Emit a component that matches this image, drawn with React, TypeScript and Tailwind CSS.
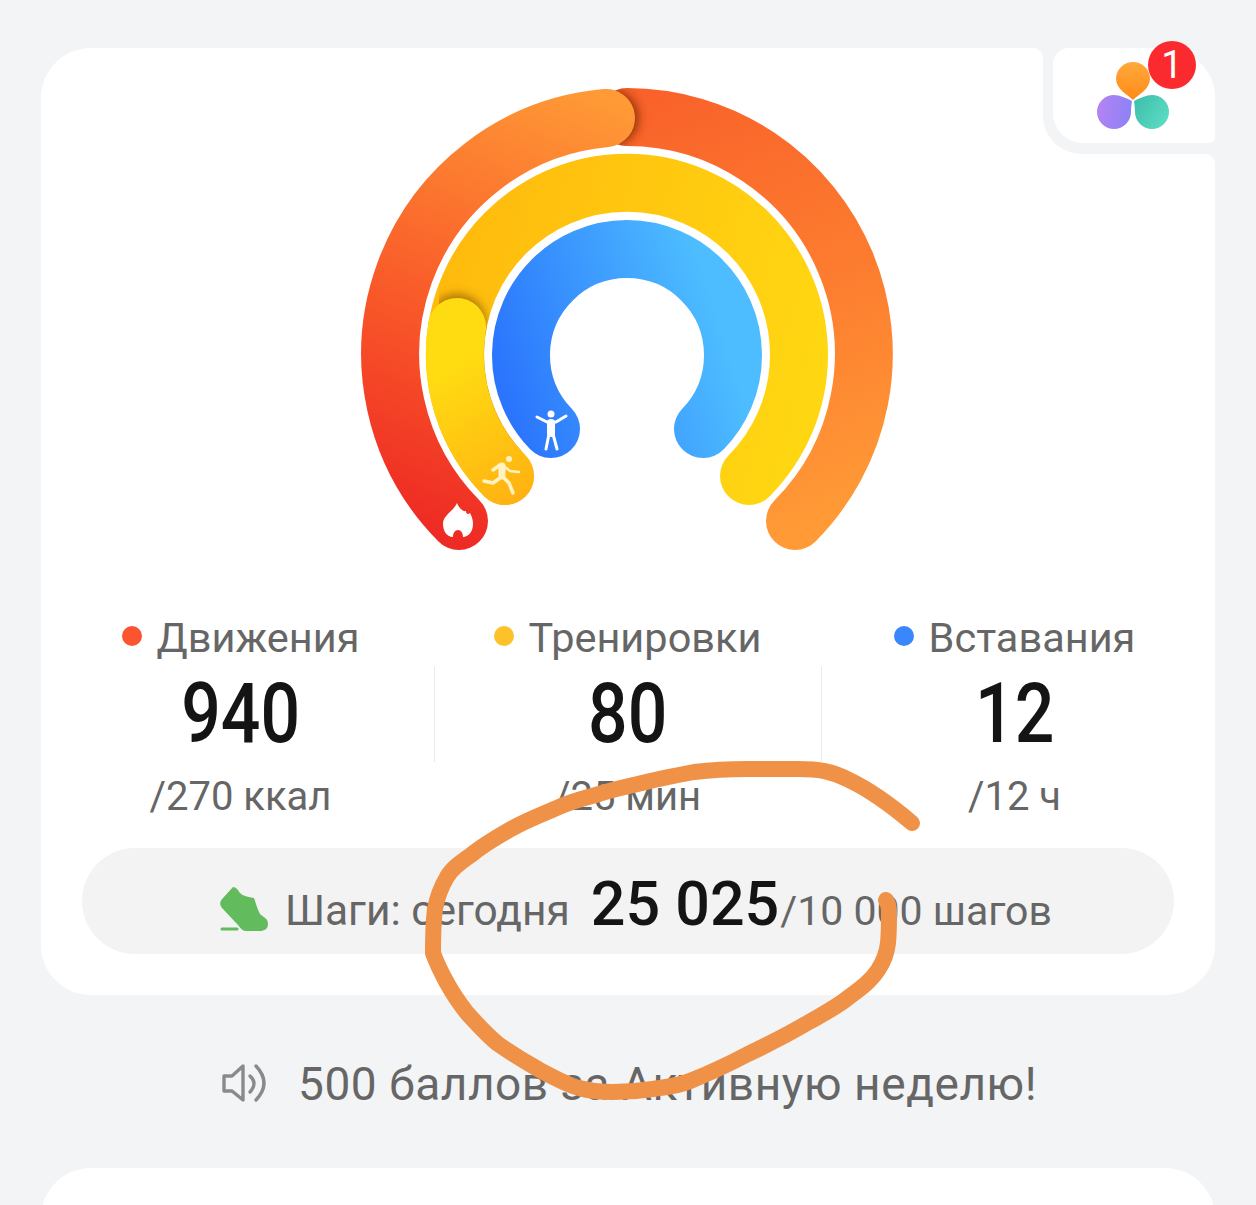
const font = { fontFamily: '"Roboto", "Noto Sans", sans-serif' };

const stats = [
  { label: "Движения", dot: "bg-[#fb5430]", value: "940", sub: "/270 ккал" },
  { label: "Тренировки", dot: "bg-[#fdc129]", value: "80", sub: "/25 мин" },
  { label: "Вставания", dot: "bg-[#3a86fb]", value: "12", sub: "/12 ч" },
];

const OUTER_BASE = "M627 117 A237 237 0 0 1 795 521";
const OUTER_TOP = "M459 521 A237 237 0 0 1 606 118";
const MID_BASE = "M505 476 A172 172 0 1 1 749 476";
const MID_TOP = "M505 476 A172 172 0 0 1 457 327";
const INNER = "M551 429 A106 106 0 1 1 703 429";

function Gauge() {
  return (
    <svg viewBox="359 86 536 470" className="block w-[536px] h-[470px] ml-[318px]">
      <defs>
        <linearGradient id="outerBase" gradientUnits="userSpaceOnUse" x1="640" y1="100" x2="800" y2="530">
          <stop offset="0" stopColor="#f9622a" />
          <stop offset="0.55" stopColor="#fd7f30" />
          <stop offset="1" stopColor="#ff9a36" />
        </linearGradient>
        <linearGradient id="outerTop" gradientUnits="userSpaceOnUse" x1="450" y1="540" x2="625" y2="105">
          <stop offset="0" stopColor="#ee2a24" />
          <stop offset="0.45" stopColor="#f95a29" />
          <stop offset="1" stopColor="#ff9a36" />
        </linearGradient>
        <linearGradient id="midBase" gradientUnits="userSpaceOnUse" x1="440" y1="300" x2="800" y2="400">
          <stop offset="0" stopColor="#ffbb0d" />
          <stop offset="1" stopColor="#ffd612" />
        </linearGradient>
        <linearGradient id="midTop" gradientUnits="userSpaceOnUse" x1="450" y1="370" x2="520" y2="500">
          <stop offset="0" stopColor="#ffdb12" />
          <stop offset="1" stopColor="#ffb212" />
        </linearGradient>
        <linearGradient id="innerGrad" gradientUnits="userSpaceOnUse" x1="520" y1="440" x2="735" y2="370">
          <stop offset="0" stopColor="#2b75fd" />
          <stop offset="1" stopColor="#4dbdff" />
        </linearGradient>
        <filter id="soft" x="-30%" y="-30%" width="160%" height="160%">
          <feGaussianBlur stdDeviation="5" />
        </filter>
        <mask id="outerMask" maskUnits="userSpaceOnUse" x="359" y="86" width="536" height="470">
          <path d={OUTER_BASE} stroke="white" strokeWidth="58" fill="none" strokeLinecap="round" />
        </mask>
        <mask id="midMask" maskUnits="userSpaceOnUse" x="359" y="86" width="536" height="470">
          <path d={MID_BASE} stroke="white" strokeWidth="58" fill="none" strokeLinecap="round" />
        </mask>
      </defs>
      <g fill="none" strokeWidth="58" strokeLinecap="round">
        <path d={OUTER_BASE} stroke="url(#outerBase)" />
        <g mask="url(#outerMask)">
          <path d={OUTER_TOP} stroke="#7a2a00" strokeOpacity="0.75" filter="url(#soft)" transform="translate(4 0)" />
        </g>
        <path d={OUTER_TOP} stroke="url(#outerTop)" />
        <path d={MID_BASE} stroke="url(#midBase)" />
        <g mask="url(#midMask)">
          <path d={MID_TOP} stroke="#8a5a00" strokeOpacity="0.7" filter="url(#soft)" transform="translate(0 -4)" />
        </g>
        <path d={MID_TOP} stroke="url(#midTop)" />
        <path d={INNER} stroke="url(#innerGrad)" />
      </g>
      {/* flame */}
      <path
        d="M457 503 C459 508 463 512 466 511 C466 514 468 515 470 513 C472 517 473 520 473 524 C473 532 468 537 463 537 C463 533 461 530 458 530 C455 530 453 533 453 537 C447 537 443 531 443 524 C443 515 453 512 457 503 Z"
        fill="white"
      />
      {/* runner */}
      <g fill="none" stroke="#fff2c4" strokeLinecap="round" strokeLinejoin="round">
        <circle cx="509" cy="459" r="3" fill="#fff2c4" stroke="none" />
        <path d="M502 466 L502 476" strokeWidth="7" />
        <path d="M505 467 L510 471 L519 472" strokeWidth="2.5" />
        <path d="M500 465 L493 470" strokeWidth="3.5" />
        <path d="M500 478 L493 483 L484 481" strokeWidth="3.5" />
        <path d="M502 476 L509 483 L513 493" strokeWidth="3.5" />
      </g>
      {/* standing person */}
      <g fill="none" stroke="white" strokeLinecap="round" strokeLinejoin="round">
        <circle cx="551" cy="414" r="3.5" fill="white" stroke="none" />
        <path d="M537 417 L547 422 L556 422 L566 416" strokeWidth="3" />
        <path d="M551 423 L551 433" strokeWidth="8" />
        <path d="M549 434 L546 449" strokeWidth="3" />
        <path d="M553 434 L557 449" strokeWidth="3" />
      </g>
    </svg>
  );
}

function Shoe() {
  return (
    <svg viewBox="216 884 56 50" className="w-[56px] h-[50px] shrink-0 mt-[16px]">
      <path
        d="M233 887 C236 887 238 890 240 893 C243 896 248 897 254 898 C256 903 257 909 260 914 C263 917 268 918 268 924 C268 929 264 931 260 931 L246 931 C243 931 241 929 238 925 L222 908 C219 904 220 901 223 898 Z"
        fill="#62bb5d"
      />
      <path d="M222 929 L237 929" stroke="#62bb5d" strokeWidth="3" strokeLinecap="round" />
    </svg>
  );
}

function Speaker() {
  return (
    <svg viewBox="216 1060 56 44" className="w-[56px] h-[44px] shrink-0 mb-[3px]" fill="none" stroke="#8a8a8a" strokeWidth="3.4" strokeLinecap="round" strokeLinejoin="round">
      <path d="M224 1075 L232 1075 L243 1065 L243 1099 L232 1090 L224 1090 Z" />
      <path d="M250 1075 Q258 1082 250 1091" />
      <path d="M256 1065 Q272 1082 256 1099" />
    </svg>
  );
}

function AppBadge() {
  return (
    <div className="absolute top-0 right-0 w-[172px] h-[106px] bg-[#f2f4f6] rounded-bl-[38px] rounded-tr-[50px]">
      <div className="absolute -left-[10px] top-0 w-[10px] h-[10px] bg-[radial-gradient(circle_at_0_100%,#ffffff_9.5px,#f2f4f6_10.5px)]" />
      <div className="absolute right-0 -bottom-[10px] w-[10px] h-[10px] bg-[radial-gradient(circle_at_0_100%,#ffffff_9.5px,#f2f4f6_10.5px)]" />
      <div className="absolute left-[10px] right-0 top-0 h-[95px] bg-white rounded-tl-[16px] rounded-bl-[30px] rounded-br-[6px] rounded-tr-[50px]" />
      <svg viewBox="1090 56 84 80" className="absolute left-[47px] top-[8px] w-[84px] h-[80px]">
        <defs>
          <linearGradient id="pOrange" x1="0.5" y1="0" x2="0.5" y2="1">
            <stop offset="0" stopColor="#ffa93c" />
            <stop offset="1" stopColor="#ff8b17" />
          </linearGradient>
          <linearGradient id="pPurple" x1="0" y1="0.4" x2="1" y2="0.6">
            <stop offset="0" stopColor="#b583f2" />
            <stop offset="1" stopColor="#8a82f6" />
          </linearGradient>
          <linearGradient id="pTeal" x1="0" y1="0.2" x2="1" y2="0.8">
            <stop offset="0" stopColor="#3fc0ad" />
            <stop offset="1" stopColor="#5edcc4" />
          </linearGradient>
        </defs>
        <path d="M1133 100 C1128 95 1116 89 1116 79 A17 17 0 0 1 1150 79 C1150 89 1138 95 1133 100 Z" fill="url(#pOrange)" />
        <path d="M1132 101 C1131.500 105 1131 108 1131 112 A17 17 0 1 1 1114 95 C1120 95 1126 98 1132 101 Z" fill="url(#pPurple)" />
        <path d="M1134 101 C1134.500 105 1135 108 1135 112 A17 17 0 1 0 1152 95 C1146 95 1140 98 1134 101 Z" fill="url(#pTeal)" />
      </svg>
      <div className="absolute left-[105px] -top-[7px] w-[48px] h-[48px] rounded-full bg-[#fb2a2e] text-white text-[38px] leading-[48px] text-center">
        1
      </div>
    </div>
  );
}

function Scribble() {
  return (
    <svg viewBox="0 0 1256 1205" className="absolute inset-0 w-[1256px] h-[1205px] pointer-events-none" fill="none">
      <path
        d="M912 823 C892 806 870 790 849 780 C832 771 818 769 798 769 L748 769 C725 769 710 770 694 772 C678 775 662 778 646 782 C630 786 614 789 599 794 C585 798 572 801 559 807 C543 814 527 820 511 829 C497 837 483 845 471 855 C461 862 452 868 447 877 C441 887 437 898 435 909 C433 924 433 938 433 953 C437 964 442 974 447 983 C453 994 460 1004 467 1013 C477 1024 487 1035 498 1044 C511 1053 524 1061 538 1069 C551 1076 565 1084 579 1088 C590 1091 602 1092 613 1092 C626 1092 640 1091 653 1089 C666 1087 678 1086 690 1081 C710 1073 729 1064 748 1054 C769 1044 789 1034 809 1022 C823 1014 837 1007 849 997 C860 989 871 981 878 970 C884 961 887 952 888 943 C889 933 889 922 889 912 C889 907 888 903 886 900"
        stroke="#f09148"
        strokeWidth="16"
        strokeLinecap="round"
        strokeLinejoin="round"
      />
    </svg>
  );
}

export default function App() {
  return (
    <div className="relative w-[1256px] h-[1205px] overflow-hidden bg-[#f2f4f6] pt-[48px] px-[41px]" style={font}>
      <div className="relative h-[947px] rounded-[50px] bg-white pt-[38px]">
        <AppBadge />
        <Gauge />

        <div className="grid grid-cols-3 w-[1161px] ml-[6px] mt-[58px]">
          {stats.map((s, i) => (
            <div key={s.label} className="flex flex-col items-center">
              <div className="flex items-center gap-[15px] h-[48px] text-[41.5px] leading-[48px] text-[#666666]">
                <span className={`w-[20px] h-[20px] rounded-full mb-[4px] ${s.dot}`} />
                <span>{s.label}</span>
              </div>
              <div className={`w-full h-[96px] mt-[4px] flex items-center justify-center ${i > 0 ? "border-l border-[#ececec]" : ""}`}>
                <span className="text-[84px] leading-[96px] font-medium text-[#141414] scale-x-[0.83]">{s.value}</span>
              </div>
              <div className="mt-[10px] h-[50px] text-[40px] leading-[50px] text-[#666666]">{s.sub}</div>
            </div>
          ))}
        </div>

        <div className="mt-[26px] mx-[41px] h-[106px] rounded-full bg-[#f3f3f3] flex items-center pl-[134px]">
          <Shoe />
          <div className="flex items-baseline mt-[8px] ml-[13px] whitespace-nowrap">
            <span className="text-[42.5px] text-[#666666]">Шаги: сегодня</span>
            <span className="ml-[21px] text-[61px] font-medium text-[#141414]">25 025</span>
            <span className="ml-[1px] text-[41px] text-[#666666]">/10 000 шагов</span>
          </div>
        </div>
      </div>

      <div className="h-[173px] pt-[6px] pl-[175px] flex items-center">
        <Speaker />
        <span className="ml-[26px] text-[46px] tracking-[0.55px] text-[#666666] whitespace-nowrap">500 баллов за Активную неделю!</span>
      </div>

      <div className="h-[100px] rounded-t-[50px] bg-white" />
      <Scribble />
    </div>
  );
}
